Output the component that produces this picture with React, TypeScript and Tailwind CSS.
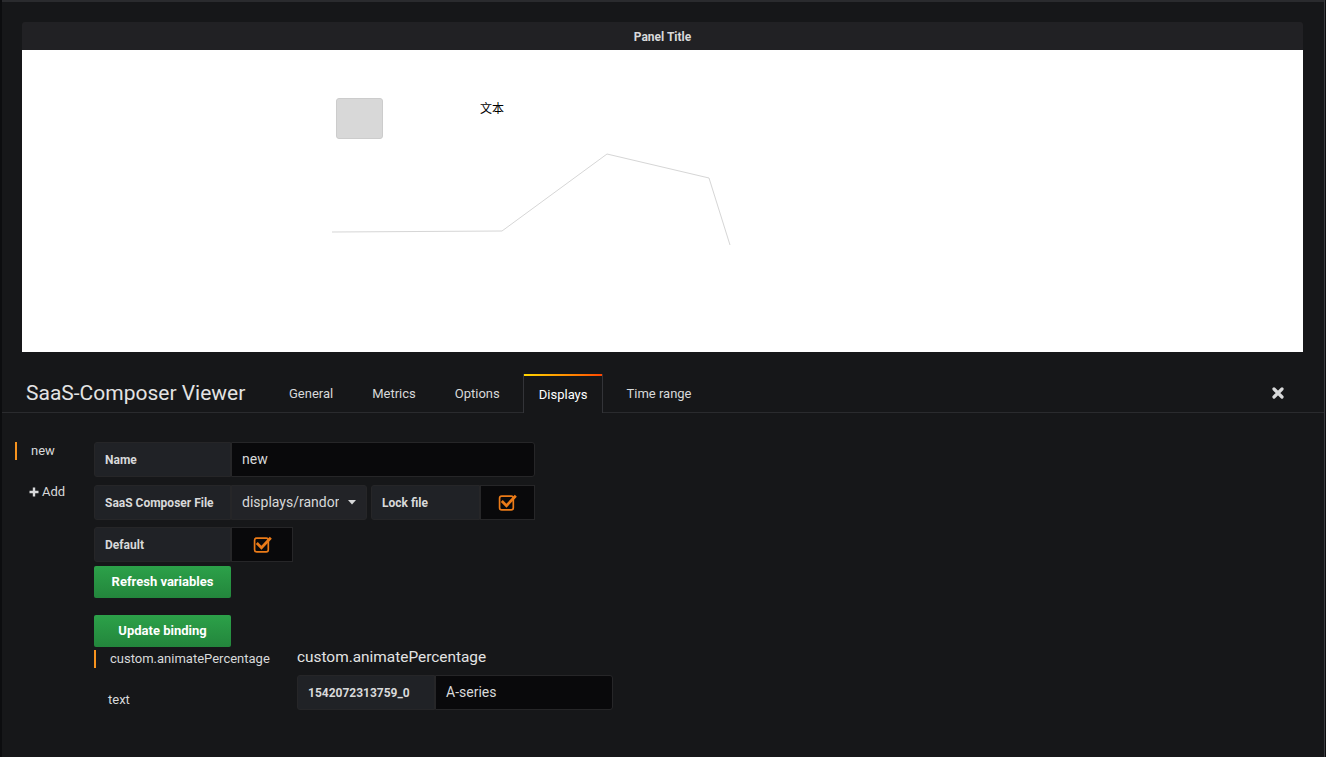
import React from 'react'

const tabs = ['General', 'Metrics', 'Options', 'Displays', 'Time range']

function CheckIcon() {
  return (
    <svg width="19" height="19" viewBox="0 0 18 18" fill="none">
      <rect x="1.5" y="3" width="13" height="13" rx="2" stroke="#eb7b18" strokeWidth="1.6" />
      <path d="M4.5 8.5 L8 12 L16 3.5" stroke="#eb7b18" strokeWidth="2.6" strokeLinecap="square" />
    </svg>
  )
}

function Label({ text, w }: { text: string; w: string }) {
  return (
    <div className={`${w} h-full flex items-center pl-[10px] bg-[#202226] border border-[#262628] text-[12px] font-bold text-[#d8d9da] rounded-l-[3px]`}>
      {text}
    </div>
  )
}

export default function App() {
  return (
    <div className="w-[1326px] h-[757px] bg-[#161719] overflow-hidden flex font-['Roboto',sans-serif]">
      <div className="w-[2px] h-full bg-[#0c0d0f]" />
      <div className="flex-1 flex flex-col border-t-2 border-[#2a2b2e]">
        {/* Panel */}
        <div className="ml-[20px] mt-[20px] w-[1281px] flex flex-col">
          <div className="h-[28px] bg-[#212124] rounded-t-[3px] flex items-center justify-center pt-px text-[12px] font-bold text-[#d8d9da]">
            Panel Title
          </div>
          <div className="relative h-[302px] bg-white">
            <div className="absolute left-[314px] top-[48px] w-[47px] h-[41px] bg-[#d8d8d8] border border-[#cccccc] rounded-[3px]" />
            <div className="absolute left-[458px] top-[49px] text-[12px] text-black font-['Noto_Sans_CJK_SC',sans-serif]">文本</div>
            <svg className="absolute left-0 top-0" width="1281" height="302">
              <polyline
                points="310,182 480,181 585,104 687,128 708,195"
                fill="none"
                stroke="#d6d6d6"
                strokeWidth="1"
              />
            </svg>
          </div>
        </div>

        {/* Editor header */}
        <div className="mt-[22px] h-[39px] flex items-stretch border-b border-[#2a2b2e]">
          <div className="w-[271px] pl-6 pt-px flex items-center text-[21px] text-[#e3e3e3]">SaaS-Composer Viewer</div>
          <div className="flex gap-[7px] items-stretch">
            {tabs.map((t) =>
              t === 'Displays' ? (
                <div key={t} className="relative px-[15px] pt-[2px] flex items-center text-[13px] text-[#ffffff] bg-[#161719] border-x border-[#333438] -mb-px">
                  <div className="absolute left-0 right-0 top-0 h-[2px] bg-gradient-to-r from-[#ffd500] to-[#ff4400]" />
                  {t}
                </div>
              ) : (
                <div key={t} className="px-4 pt-[2px] flex items-center text-[13px] text-[#d8d9da]">
                  {t}
                </div>
              )
            )}
          </div>
          <div className="flex-1" />
          <div className="w-[52px] flex items-center">
            <svg width="12" height="12" viewBox="0 0 12 12">
              <path d="M2 2 L10 10 M10 2 L2 10" stroke="#d8d9da" strokeWidth="3.2" strokeLinecap="round" />
            </svg>
          </div>
        </div>

        {/* Body */}
        <div className="flex pt-[29px]">
          <div className="w-[92px] pl-[13px] flex flex-col">
            <div className="h-[18px] border-l-2 border-[#f7931e] pl-[14px] flex items-center text-[13px] text-[#d8d9da]">new</div>
            <div className="mt-[22px] pl-[14px] flex items-center gap-[3px] text-[13px] text-[#d8d9da]">
              <svg width="10" height="10" viewBox="0 0 10 10">
                <path d="M5 0.5 V9.5 M0.5 5 H9.5" stroke="#d8d9da" strokeWidth="2.4" />
              </svg>
              Add
            </div>
          </div>

          <div className="flex flex-col">
            <div className="h-[35px] flex">
              <Label text="Name" w="w-[137px]" />
              <div className="w-[304px] h-full bg-[#09090b] border border-[#262628] rounded-r-[3px] flex items-center pl-[10px] text-[14px] text-[#d8d9da]">
                new
              </div>
            </div>

            <div className="mt-[8px] h-[35px] flex">
              <Label text="SaaS Composer File" w="w-[137px]" />
              <div className="w-[136px] h-full bg-[#222327] border border-[#262628] rounded-r-[3px] flex items-center pl-[10px] text-[14px] text-[#d8d9da]">
                <span className="w-[97px] overflow-hidden whitespace-nowrap">displays/random.json</span>
                <svg className="ml-[9px]" width="8" height="5" viewBox="0 0 8 5">
                  <path d="M0 0 H8 L4 4.5 Z" fill="#d8d9da" />
                </svg>
              </div>
              <div className="ml-[4px] flex h-full">
                <Label text="Lock file" w="w-[109px]" />
                <div className="w-[55px] h-full bg-[#09090b] border border-[#262628] flex items-center justify-center">
                  <CheckIcon />
                </div>
              </div>
            </div>

            <div className="mt-[7px] h-[35px] flex">
              <Label text="Default" w="w-[137px]" />
              <div className="w-[62px] h-full bg-[#09090b] border border-[#262628] flex items-center justify-center">
                <CheckIcon />
              </div>
            </div>

            <button className="mt-[4px] w-[137px] h-[32px] rounded-[2px] bg-gradient-to-b from-[#2ca149] to-[#23863c] text-white text-[13px] font-bold">
              Refresh variables
            </button>
            <button className="mt-[17px] w-[137px] h-[32px] rounded-[2px] bg-gradient-to-b from-[#2ca149] to-[#23863c] text-white text-[13px] font-bold">
              Update binding
            </button>

            <div className="mt-[3px] flex">
              <div className="w-[203px] flex flex-col">
                <div className="h-[18px] border-l-2 border-[#f7931e] pl-[14px] flex items-center text-[13px] text-[#d8d9da] whitespace-nowrap">
                  custom.animatePercentage
                </div>
                <div className="mt-[22px] pl-[14px] text-[13px] text-[#d8d9da]">text</div>
              </div>
              <div className="flex flex-col">
                <div className="h-[16px] flex items-center text-[15.4px] text-[#e3e3e3]">custom.animatePercentage</div>
                <div className="mt-[9px] h-[35px] flex">
                  <Label text="1542072313759_0" w="w-[138px]" />
                  <div className="w-[178px] h-full bg-[#09090b] border border-[#262628] rounded-r-[3px] flex items-center pl-[10px] text-[14px] text-[#d8d9da]">
                    A-series
                  </div>
                </div>
              </div>
            </div>
          </div>
        </div>
      </div>
      <div className="w-[1px] h-full bg-[#3a3b3f]" />
      <div className="w-[1px] h-full bg-[#0c0d0f]" />
    </div>
  )
}
